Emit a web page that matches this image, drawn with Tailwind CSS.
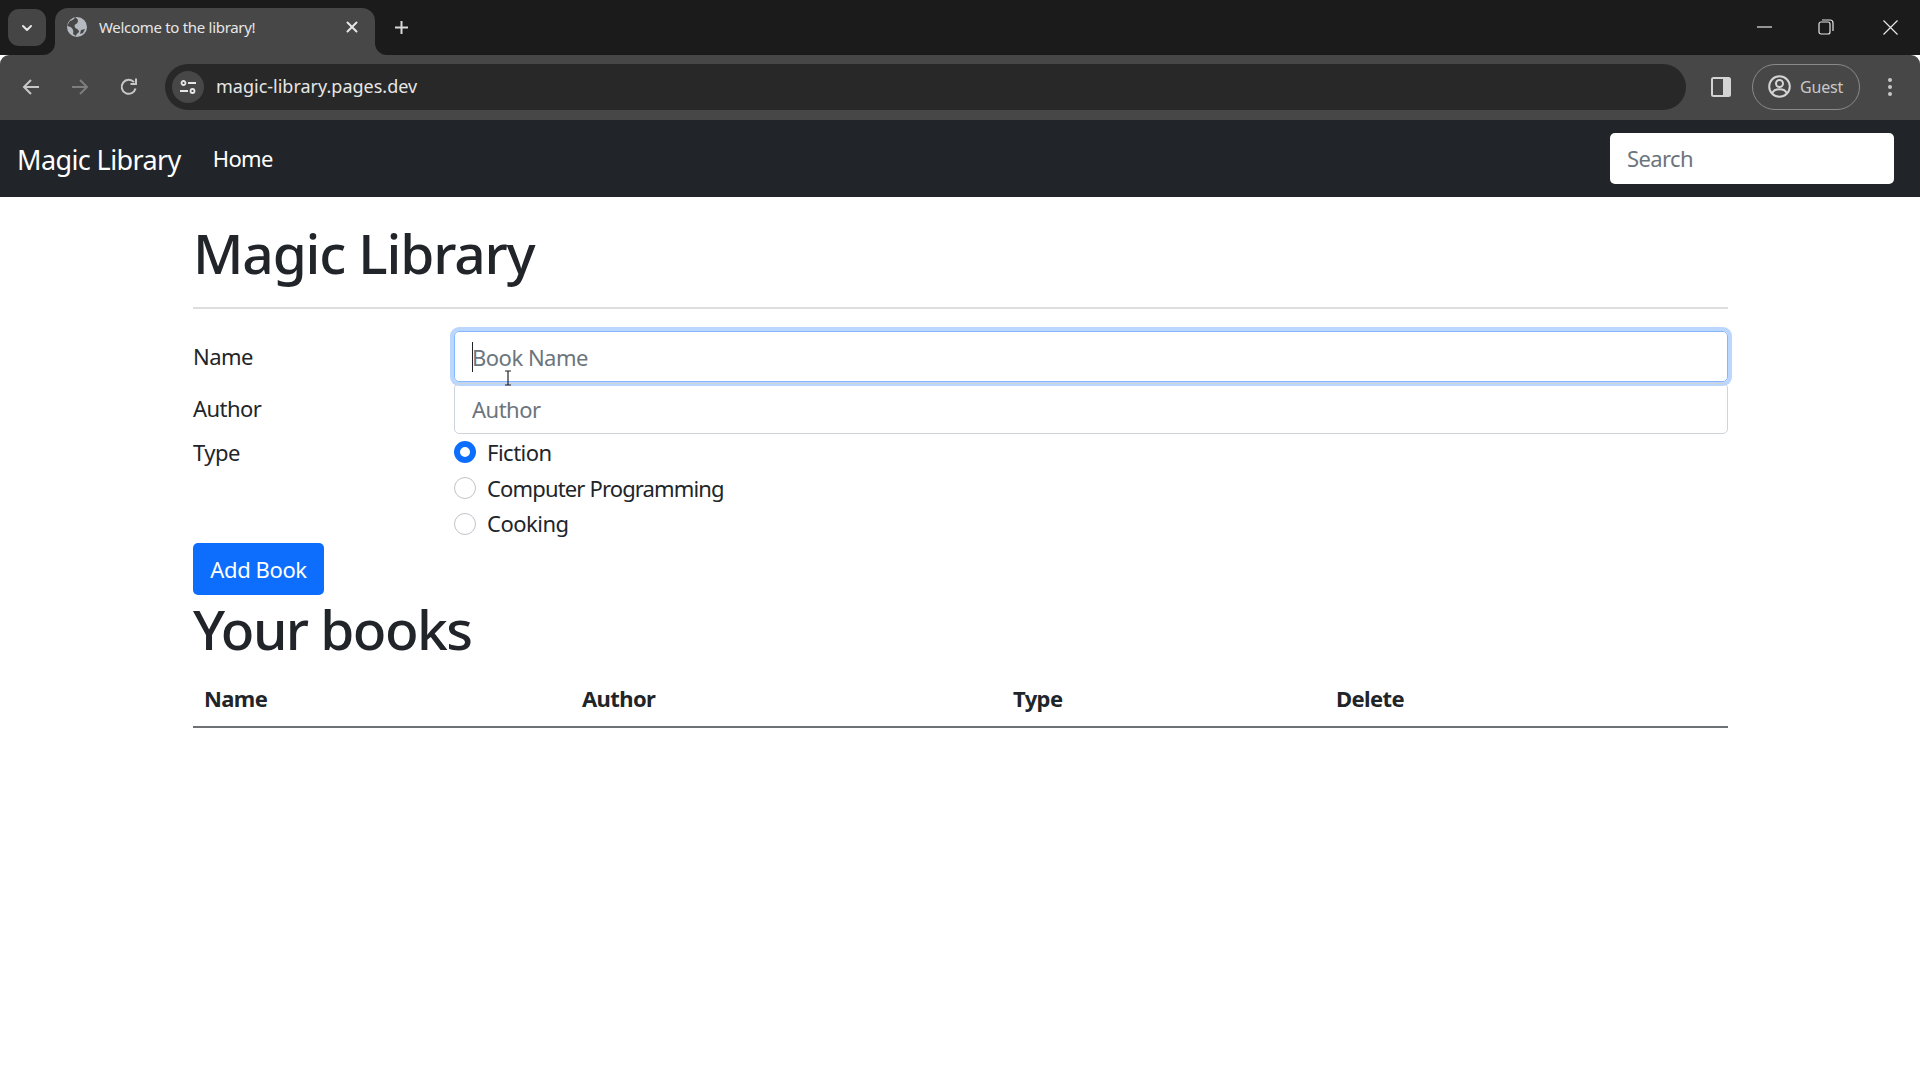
<!DOCTYPE html>
<html>
<head>
<meta charset="utf-8">
<title>Welcome to the library!</title>
<script src="https://cdn.jsdelivr.net/npm/@tailwindcss/browser@4"></script>
</head>
<body class="bg-white font-['Noto_Sans','Open_Sans',sans-serif] text-[#212529] overflow-hidden">
<div class="w-[1920px] h-[1080px] flex flex-col">
  <!-- tab strip -->
  <div class="h-[55px] bg-[#1b1b1b] flex items-end shrink-0 relative">
    <div class="absolute left-[8px] top-[9px] w-[38px] h-[37px] rounded-[11px] bg-[#454545] flex items-center justify-center">
      <svg width="14" height="14" viewBox="0 0 14 14" fill="none" stroke="#e6e6e6" stroke-width="2" stroke-linecap="round" stroke-linejoin="round"><path d="M3 5l4 4 4-4"/></svg>
    </div>
    <div class="ml-[55px] w-[320px] h-[47px] rounded-t-[13px] bg-[#474747] flex items-center pl-[12px] pr-[17px] pb-[9px] relative">
      <svg class="absolute left-[-12px] bottom-0" width="12" height="12" viewBox="0 0 12 12"><path d="M12 0v12H0A12 12 0 0 0 12 0z" fill="#474747"/></svg>
      <svg class="absolute right-[-12px] bottom-0" width="12" height="12" viewBox="0 0 12 12"><path d="M0 0v12h12A12 12 0 0 1 0 0z" fill="#474747"/></svg>
      <svg width="20" height="20" viewBox="0 0 20 20" class="shrink-0"><circle cx="10" cy="10" r="10" fill="#b5bac0"/><path d="M8 0.5c-1 2-3 3-5 3.500-1 1-2 3-2.500 5 2 .5 4 1 5 3 1 1.500 1 3 .5 5l3 2c0-2 2-3 3-4 0-1.500-1-3-3-3.500-1-1-2-2-1-4 2-.5 3-2 3-4.500-1-1.500-2-2.500-3-3z" fill="#474747"/><path d="M14 13l4-1-2 4-3 1z" fill="#474747"/></svg>
      <span class="ml-[12px] text-[15px] tracking-[-0.3px] text-[#e6e6e6] whitespace-nowrap">Welcome to the library!</span>
      <svg class="ml-auto" width="12" height="12" viewBox="0 0 12 12" fill="none" stroke="#e6e6e6" stroke-width="2" stroke-linecap="round"><path d="M1.500 1.500l9 9M10.500 1.500l-9 9"/></svg>
    </div>
    <svg class="absolute left-[394px] top-[20px]" width="15" height="15" viewBox="0 0 15 15" fill="none" stroke="#d9d9d9" stroke-width="2"><path d="M7.500 1v13M1 7.500h13"/></svg>
    <svg class="absolute left-[1757px] top-[26px]" width="15" height="2" viewBox="0 0 15 2"><path d="M0 1h15" stroke="#e6e6e6" stroke-width="1.200"/></svg>
    <svg class="absolute left-[1818px] top-[19px]" width="16" height="16" viewBox="0 0 16 16" fill="none" stroke="#e6e6e6" stroke-width="1.200"><rect x="1" y="3" width="11" height="12" rx="2"/><path d="M4 1h8a3 3 0 0 1 3 3v8"/></svg>
    <svg class="absolute left-[1883px] top-[20px]" width="15" height="15" viewBox="0 0 15 15" fill="none" stroke="#e6e6e6" stroke-width="1.200"><path d="M.5.500l14 14M14.500.500l-14 14"/></svg>
  </div>
  <!-- toolbar -->
  <div class="h-[65px] bg-[#474747] rounded-t-[9px] flex items-center shrink-0 pb-[2px]">
    <svg class="ml-[21px]" width="20" height="20" viewBox="0 0 20 20" fill="none" stroke="#c7c7c7" stroke-width="2"><path d="M18 10H3M10 3l-7 7 7 7"/></svg>
    <svg class="ml-[29px]" width="20" height="20" viewBox="0 0 20 20" fill="none" stroke="#7d7d7d" stroke-width="2"><path d="M2 10h15M10 3l7 7-7 7"/></svg>
    <svg class="ml-[29px]" width="20" height="20" viewBox="0 0 20 20" fill="none" stroke="#c7c7c7" stroke-width="2"><path d="M16.500 11.500A7 7 0 1 1 15 5.200"/><path d="M17 1.500V7h-5.500" /></svg>
    <div class="ml-[26px] w-[1521px] h-[46px] rounded-full bg-[#282828] flex items-center pl-[7px]">
      <div class="w-[32px] h-[32px] rounded-full bg-[#474747] flex items-center justify-center">
        <svg width="18" height="14" viewBox="0 0 18 14" fill="none" stroke="#e6e6e6" stroke-width="1.800"><circle cx="4.500" cy="3" r="2"/><path d="M9 3h8M1 11h8"/><circle cx="13.500" cy="11" r="2"/></svg>
      </div>
      <span class="ml-[12px] text-[18px] text-[#e6e6e6] whitespace-nowrap">magic-library.pages.dev</span>
    </div>
    <svg class="ml-[25px]" width="20" height="20" viewBox="0 0 20 20"><rect x="0" y="0" width="20" height="20" rx="2.500" fill="#d4d4d4"/><rect x="2" y="2" width="10" height="16" fill="#474747"/></svg>
    <div class="ml-[21px] w-[108px] h-[46px] rounded-full border border-[#8a8a8a] flex items-center pl-[15px]">
      <svg width="23" height="23" viewBox="0 0 23 23" fill="none" stroke="#d4d4d4" stroke-width="2"><circle cx="11.500" cy="11.500" r="10.300"/><circle cx="11.500" cy="8.500" r="3.500"/><path d="M4.500 18c1-3 4-3.800 7-3.800s6 .8 7 3.800"/></svg>
      <span class="ml-[9px] text-[16px] tracking-[-0.2px] text-[#c7c7c7]">Guest</span>
    </div>
    <svg class="ml-[27px]" width="6" height="20" viewBox="0 0 6 20" fill="#c7c7c7"><circle cx="3" cy="3" r="2"/><circle cx="3" cy="10" r="2"/><circle cx="3" cy="17" r="2"/></svg>
  </div>
  <!-- navbar -->
  <nav class="h-[77px] bg-[#212529] flex items-center pl-[17px] pr-[26px] shrink-0">
    <a class="text-[27px] tracking-[-0.6px] text-white whitespace-nowrap relative top-[2px]">Magic Library</a>
    <a class="ml-[32px] text-[22px] tracking-[-0.7px] text-white">Home</a>
    <input placeholder="Search" class="ml-auto w-[284px] h-[51px] bg-white rounded-[5px] px-[17px] pb-[2px] text-[22px] tracking-[-0.6px] text-[#212529] placeholder:text-[#6c757d] outline-none">
  </nav>
  <!-- main -->
  <main class="ml-[193px] w-[1535px] flex flex-col">
    <h1 class="mt-[23px] text-[55px] leading-[66px] font-medium tracking-[-1.15px]">Magic Library</h1>
    <hr class="mt-[21px] border-0 h-[2px] bg-[#dcdddd]">
    <form class="mt-[21px] flex flex-col">
      <div class="flex items-center h-[53px]">
        <label class="w-[261px] text-[22px] tracking-[-0.55px]">Name</label>
        <input placeholder="Book Name" class="w-[1274px] h-[51px] rounded-[5px] border border-[#86b7fe] shadow-[0_0_0_4px_#bcd7fe] px-[17px] text-[22px] tracking-[-0.5px] placeholder:text-[#6c757d] outline-none">
      </div>
      <div class="flex items-center h-[51px]">
        <label class="w-[261px] text-[22px] tracking-[-0.55px]">Author</label>
        <input placeholder="Author" class="w-[1274px] h-[51px] rounded-[5px] border border-[#ced4da] px-[17px] text-[22px] tracking-[-0.5px] placeholder:text-[#6c757d] outline-none">
      </div>
      <div class="flex">
        <span class="w-[260px] text-[22px] tracking-[-0.5px] leading-[36px]">Type</span>
        <div class="flex flex-col pl-[1px]">
          <label class="flex items-center h-[36px] text-[22px] tracking-[-0.5px]"><span class="w-[22px] h-[22px] rounded-full border-[6px] border-[#0d6efd] bg-white mr-[11px] shrink-0"></span>Fiction</label>
          <label class="flex items-center h-[36px] text-[22px] tracking-[-0.85px]"><span class="w-[22px] h-[22px] rounded-full border border-[#bfc4c9] bg-white mr-[11px] shrink-0"></span>Computer Programming</label>
          <label class="flex items-center h-[35px] text-[22px] tracking-[-0.5px]"><span class="w-[22px] h-[22px] rounded-full border border-[#bfc4c9] bg-white mr-[11px] shrink-0"></span>Cooking</label>
        </div>
      </div>
      <button type="button" class="mt-[2px] w-[131px] h-[52px] rounded-[5px] bg-[#0d6efd] text-white text-[22px] tracking-[-0.4px]">Add Book</button>
    </form>
    <h2 class="text-[55px] leading-[68px] font-medium tracking-[-1.55px]">Your books</h2>
    <div class="mt-[10px] grid grid-cols-[378px_430px_324px_1fr] border-b-2 border-[#6f7275] h-[55px] pb-[2px] items-center text-[22px] font-bold tracking-[-0.6px]">
      <span class="pl-[11px]">Name</span>
      <span class="pl-[11px]">Author</span>
      <span class="pl-[12px]">Type</span>
      <span class="pl-[11px]">Delete</span>
    </div>
  </main>
</div>
<div class="absolute left-[472px] top-[342px] w-[1px] h-[30px] bg-[#212529]"></div>
<svg class="absolute left-[503px] top-[370px]" width="10" height="16" viewBox="0 0 10 16" fill="none" stroke="#222" stroke-width="1.200"><path d="M2 1h6M5 1v14M2 15h6"/></svg>
</body>
</html>
